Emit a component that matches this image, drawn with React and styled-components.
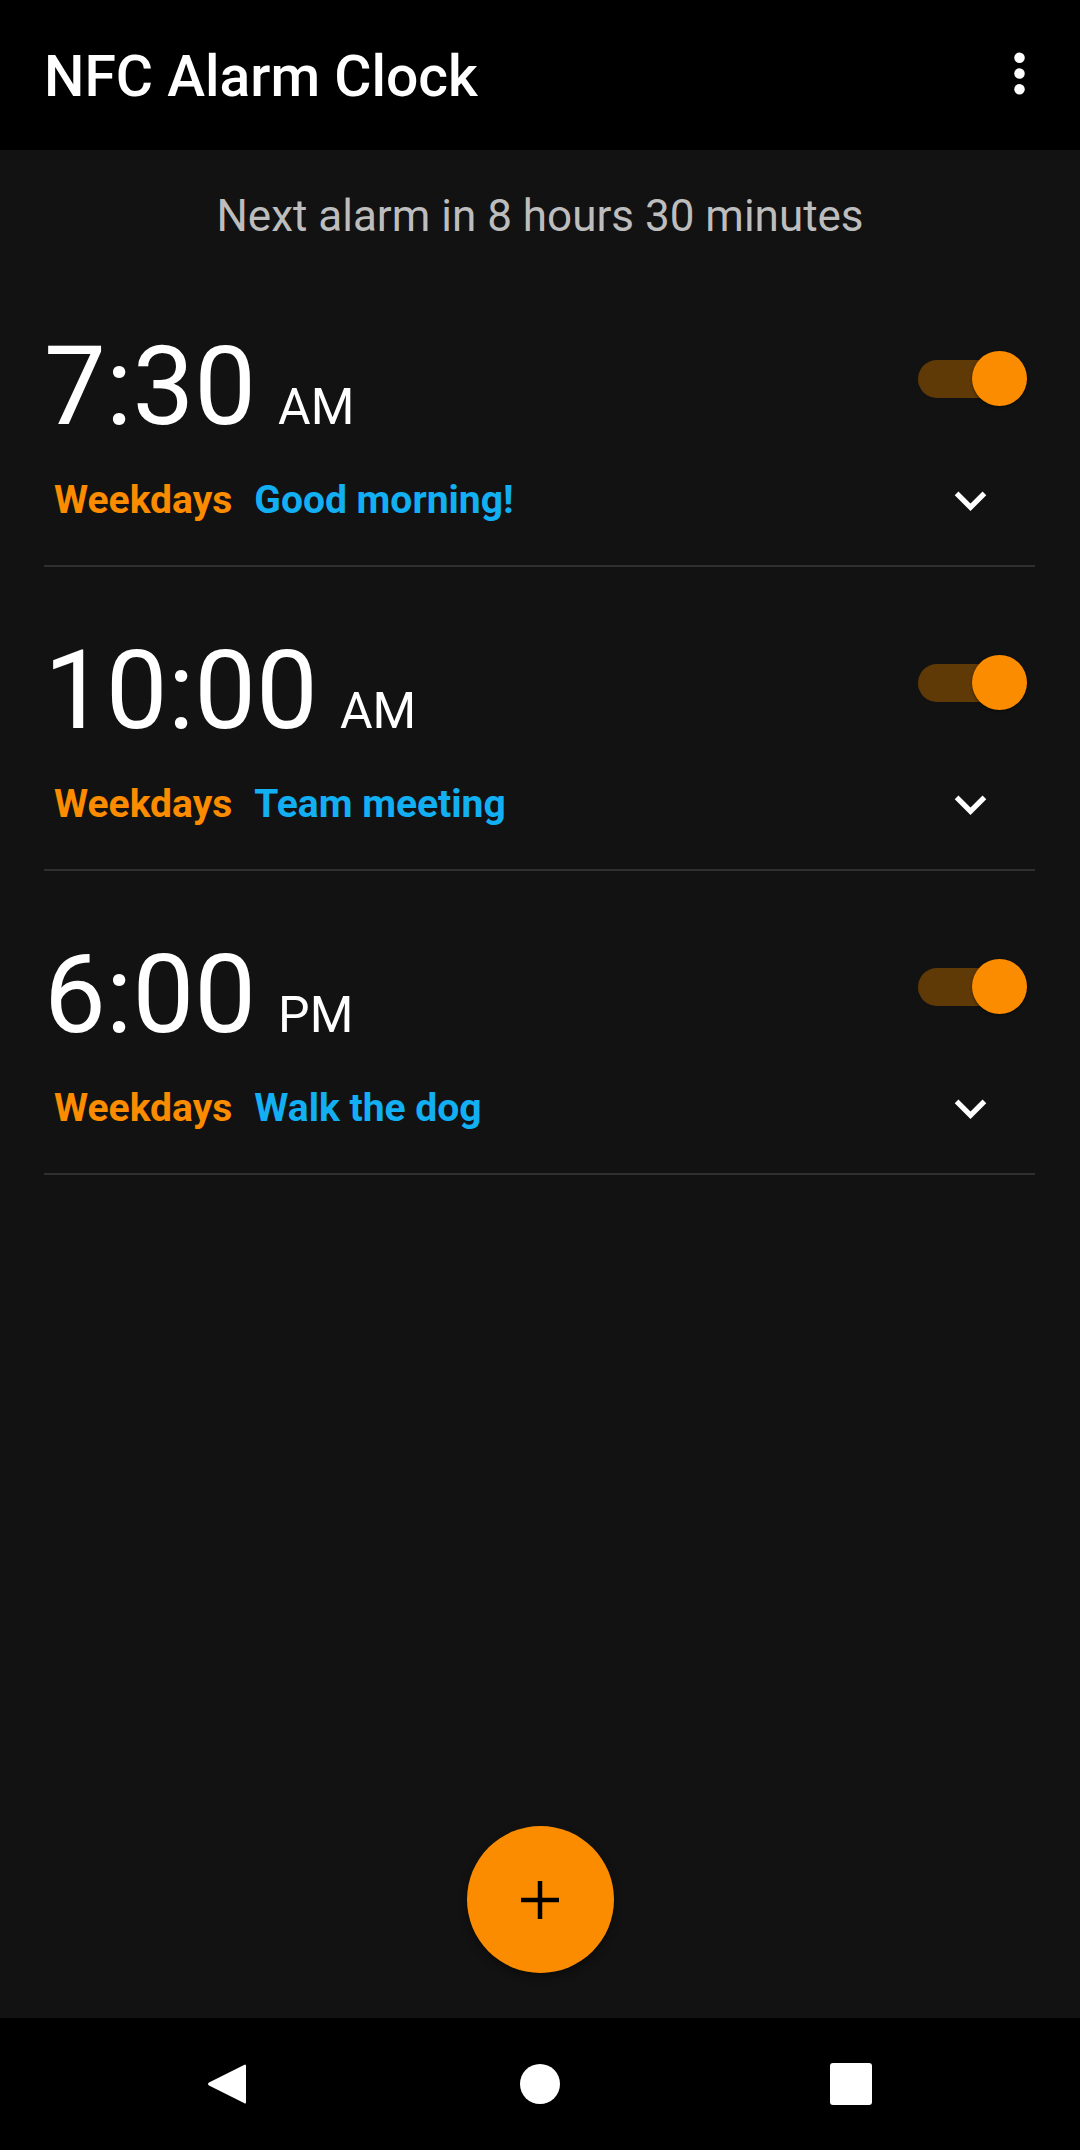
import React from 'react';
import styled, { createGlobalStyle } from 'styled-components';

const GlobalStyle = createGlobalStyle`
  html, body {
    margin: 0;
    padding: 0;
    background: #121212;
  }
  body {
    font-family: Roboto, "Noto Sans", "Liberation Sans", sans-serif;
  }
`;

const Screen = styled.div`
  height: 100vh;
  display: flex;
  flex-direction: column;
  background: #121212;
  color: #fff;
`;

const AppBar = styled.header`
  height: 150px;
  flex-shrink: 0;
  background: #000;
  display: flex;
  align-items: center;
  justify-content: space-between;
  padding: 0 29px 0 44px;
  box-sizing: border-box;
`;

const Title = styled.h1`
  margin: 0;
  padding-top: 3px;
  font-size: 57px;
  line-height: 1;
  font-weight: 500;
  color: #fff;
`;

const MenuButton = styled.button`
  width: 63px;
  height: 63px;
  margin-top: -4px;
  padding: 0;
  border: none;
  background: none;
  display: flex;
  align-items: center;
  justify-content: center;
`;

const Main = styled.main`
  flex: 1;
  display: flex;
  flex-direction: column;
`;

const NextAlarm = styled.p`
  margin: 38px 0 0;
  text-align: center;
  font-size: 44px;
  line-height: 56px;
  color: #bdbdbd;
`;

const List = styled.ul`
  list-style: none;
  margin: 19px 45px 0 44px;
  padding: 0;
`;

const Row = styled.li`
  padding: 69px 0 40px;
  border-bottom: 2px solid #2f2f2f;
`;

const TopLine = styled.div`
  display: flex;
  align-items: flex-start;
  justify-content: space-between;
`;

const Time = styled.div`
  display: flex;
  align-items: baseline;
  gap: 22px;
`;

const Clock = styled.span`
  font-size: 110px;
  line-height: 1;
  font-weight: 400;
`;

const Meridiem = styled.span`
  font-size: 50px;
  line-height: 1;
`;

const Switch = styled.div`
  position: relative;
  width: 109px;
  height: 55px;
  margin: 19px 8px 0 0;
  display: flex;
  align-items: center;
`;

const Track = styled.div`
  width: 94px;
  height: 38px;
  border-radius: 19px;
  background: ${p => (p.$on ? '#603a06' : '#555')};
`;

const Thumb = styled.div`
  position: absolute;
  top: 0;
  left: ${p => (p.$on ? '54px' : '0')};
  width: 55px;
  height: 55px;
  border-radius: 50%;
  background: ${p => (p.$on ? '#fb8c00' : '#bdbdbd')};
  box-shadow: 0 1px 3px rgba(0, 0, 0, 0.5);
`;

const BottomLine = styled.div`
  margin-top: 33px;
  height: 50px;
  display: flex;
  align-items: center;
  padding: 0 33px 0 10px;
`;

const Tag = styled.span`
  font-size: 39px;
  line-height: 50px;
  font-weight: 700;
  color: ${p => p.$color};
  margin-right: 22px;
`;

const Expand = styled.button`
  margin-left: auto;
  width: 63px;
  height: 63px;
  padding: 0;
  border: none;
  background: none;
  display: flex;
  align-items: center;
  justify-content: center;
`;

const FabSlot = styled.div`
  margin-top: auto;
  display: flex;
  justify-content: center;
  padding-bottom: 45px;
`;

const Fab = styled.button`
  width: 147px;
  height: 147px;
  border-radius: 50%;
  border: none;
  background: #fb8c00;
  display: flex;
  align-items: center;
  justify-content: center;
  box-shadow: 0 4px 8px rgba(0, 0, 0, 0.4);
`;

const NavBar = styled.nav`
  height: 132px;
  flex-shrink: 0;
  background: #000;
  display: grid;
  grid-template-columns: 207px 40px 273px 40px 270px 42px 1fr;
  align-items: center;
`;

const NavIcon = styled.svg`
  grid-column: ${p => p.$col};
  display: block;
`;

const alarms = [
  { time: '7:30', meridiem: 'AM', days: 'Weekdays', label: 'Good morning!' },
  { time: '10:00', meridiem: 'AM', days: 'Weekdays', label: 'Team meeting' },
  { time: '6:00', meridiem: 'PM', days: 'Weekdays', label: 'Walk the dog' },
];

function Chevron() {
  return (
    <svg width="63" height="63" viewBox="0 0 24 24">
      <path d="M16.59 8.59L12 13.17 7.41 8.59 6 10l6 6 6-6z" fill="#fff" />
    </svg>
  );
}

export default function App() {
  return (
    <Screen>
      <GlobalStyle />
      <AppBar>
        <Title>NFC Alarm Clock</Title>
        <MenuButton aria-label="More options">
          <svg width="63" height="63" viewBox="0 0 24 24">
            <circle cx="12" cy="6" r="2" fill="#fff" />
            <circle cx="12" cy="12" r="2" fill="#fff" />
            <circle cx="12" cy="18" r="2" fill="#fff" />
          </svg>
        </MenuButton>
      </AppBar>
      <Main>
        <NextAlarm>Next alarm in 8 hours 30 minutes</NextAlarm>
        <List>
          {alarms.map((alarm, index) => (
            <Row key={`alarm-${index}`}>
              <TopLine>
                <Time>
                  <Clock>{alarm.time}</Clock>
                  <Meridiem>{alarm.meridiem}</Meridiem>
                </Time>
                <Switch>
                  <Track $on />
                  <Thumb $on />
                </Switch>
              </TopLine>
              <BottomLine>
                <Tag $color="#fb8c00">{alarm.days}</Tag>
                <Tag $color="#12b0f2">{alarm.label}</Tag>
                <Expand aria-label="Expand">
                  <Chevron />
                </Expand>
              </BottomLine>
            </Row>
          ))}
        </List>
        <FabSlot>
          <Fab aria-label="Add alarm">
            <svg width="40" height="40" viewBox="0 0 40 40">
              <path d="M20 1v38M1 20h38" stroke="#000" strokeWidth="4.5" />
            </svg>
          </Fab>
        </FabSlot>
      </Main>
      <NavBar>
        <NavIcon $col={2} width="40" height="44" viewBox="0 0 40 44">
          <path
            d="M37 3 Q39 1.5 39 4 L39 40 Q39 42.5 37 41 L2 23.5 Q0 22 2 20.5 Z"
            fill="#fff"
          />
        </NavIcon>
        <NavIcon $col={4} width="40" height="40" viewBox="0 0 40 40">
          <circle cx="20" cy="20" r="20" fill="#fff" />
        </NavIcon>
        <NavIcon $col={6} width="42" height="42" viewBox="0 0 42 42">
          <rect x="0" y="0" width="42" height="42" rx="3" fill="#fff" />
        </NavIcon>
      </NavBar>
    </Screen>
  );
}
